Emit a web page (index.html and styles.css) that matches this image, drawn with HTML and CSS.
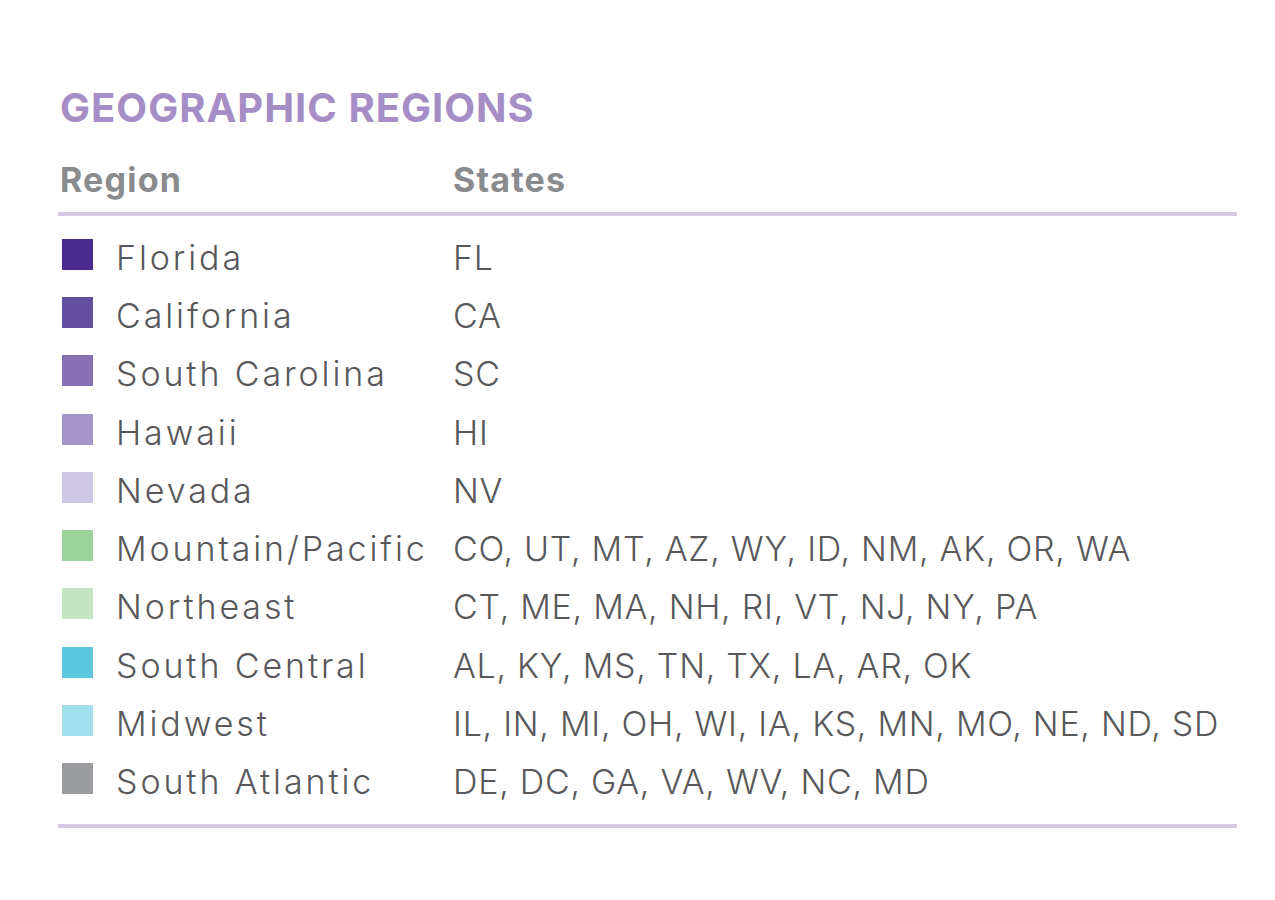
FILE: index.html
```html
<!DOCTYPE html>
<html>
<head>
<meta charset="utf-8">
<link rel="stylesheet" href="styles.css">
</head>
<body>
<div class="panel">
  <h1 class="title">GEOGRAPHIC REGIONS</h1>
  <div class="table">
    <div class="row head">
      <div class="c1">Region</div>
      <div class="c2">States</div>
    </div>
    <div class="body">
      <div class="row"><div class="c1"><span class="sw s1"></span>Florida</div><div class="c2">FL</div></div>
      <div class="row"><div class="c1"><span class="sw s2"></span>California</div><div class="c2">CA</div></div>
      <div class="row"><div class="c1"><span class="sw s3"></span>South Carolina</div><div class="c2">SC</div></div>
      <div class="row"><div class="c1"><span class="sw s4"></span>Hawaii</div><div class="c2">HI</div></div>
      <div class="row"><div class="c1"><span class="sw s5"></span>Nevada</div><div class="c2">NV</div></div>
      <div class="row"><div class="c1"><span class="sw s6"></span>Mountain/Pacific</div><div class="c2">CO, UT, MT, AZ, WY, ID, NM, AK, OR, WA</div></div>
      <div class="row"><div class="c1"><span class="sw s7"></span>Northeast</div><div class="c2">CT, ME, MA, NH, RI, VT, NJ, NY, PA</div></div>
      <div class="row"><div class="c1"><span class="sw s8"></span>South Central</div><div class="c2">AL, KY, MS, TN, TX, LA, AR, OK</div></div>
      <div class="row"><div class="c1"><span class="sw s9"></span>Midwest</div><div class="c2">IL, IN, MI, OH, WI, IA, KS, MN, MO, NE, ND, SD</div></div>
      <div class="row"><div class="c1"><span class="sw s10"></span>South Atlantic</div><div class="c2">DE, DC, GA, VA, WV, NC, MD</div></div>
    </div>
  </div>
</div>
</body>
</html>
```
FILE: styles.css
```css
html, body {
  margin: 0;
  padding: 0;
  background: #ffffff;
}
.panel {
  width: 1179px;
  margin-left: 58px;
  padding-top: 84px;
  font-family: Inter, "Liberation Sans", sans-serif;
}
.title {
  margin: 0 0 0 2px;
  font-size: 40px;
  line-height: 48px;
  font-weight: 700;
  color: #a58dc5;
  letter-spacing: 1px;
}
.table {
  margin-top: 28px;
}
.row {
  display: flex;
  align-items: center;
  height: 58.3px;
}
.head {
  height: 52px;
  align-items: flex-start;
  font-weight: 700;
  color: #8a8b8e;
  border-bottom: 4px solid #d5c9e3;
  font-size: 34px;
  line-height: 40px;
  letter-spacing: 1.2px;
}
.body {
  padding: 12px 0 13px 0;
  border-bottom: 4px solid #d5c9e3;
  font-size: 34px;
  color: #58585a;
  font-weight: 300;
}
.c1 {
  width: 395px;
  display: flex;
  align-items: center;
}
.body .c1 {
  letter-spacing: 2.9px;
}
.body .c2 {
  letter-spacing: 0.72px;
}
.head .c1 { padding-left: 2px; width: 393px; }
.c2 {
  flex: 1;
}
.sw {
  width: 31px;
  height: 31px;
  margin: 0 23px 6px 4px;
  flex: none;
}
.s1 { background: #4a2c91; }
.s2 { background: #634fa0; }
.s3 { background: #8470b2; }
.s4 { background: #a596c9; }
.s5 { background: #cdc6e4; }
.s6 { background: #9cd29b; }
.s7 { background: #c4e4c4; }
.s8 { background: #5ec7e0; }
.s9 { background: #a3dfec; }
.s10 { background: #9b9c9f; }
```
